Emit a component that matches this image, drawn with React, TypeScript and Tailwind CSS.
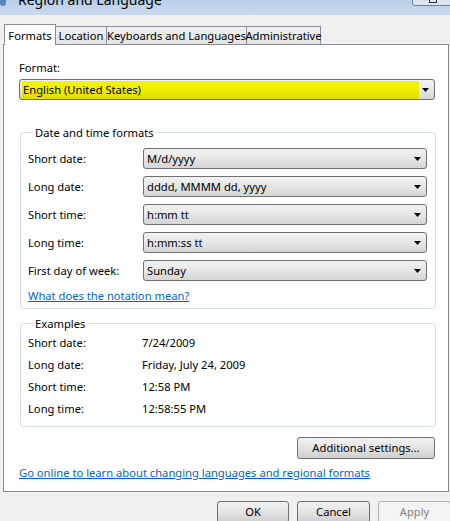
import React from "react";

const font = { fontFamily: '"Noto Sans", "Open Sans", sans-serif' };

function Arrow() {
  return (
    <svg width="7" height="4" viewBox="0 0 7 4" className="shrink-0">
      <path d="M0 0H7L3.5 4Z" fill="#000" />
    </svg>
  );
}

function Combo({ value, className = "" }: { value: string; className?: string }) {
  return (
    <div
      className={
        "flex h-[21px] items-center rounded-[3px] border border-[#707070] bg-gradient-to-b from-[#f2f2f2] via-[#e6e6e6] to-[#d5d5d5] pl-[3px] pr-[5px] " +
        className
      }
    >
      <span className="flex-1 truncate leading-[15px]">{value}</span>
      <Arrow />
    </div>
  );
}

function Btn({ label, disabled = false, className = "" }: { label: string; disabled?: boolean; className?: string }) {
  return (
    <div
      className={
        "flex h-[22px] items-center justify-center rounded-[3px] border " +
        (disabled
          ? "border-[#adb2b5] bg-[#f4f4f4] text-[#838383] "
          : "border-[#707070] bg-gradient-to-b from-[#f2f2f2] via-[#e3e3e3] to-[#cfcfcf] text-black ") +
        className
      }
    >
      {label}
    </div>
  );
}

const formatRows = [
  ["Short date:", "M/d/yyyy"],
  ["Long date:", "dddd, MMMM dd, yyyy"],
  ["Short time:", "h:mm tt"],
  ["Long time:", "h:mm:ss tt"],
  ["First day of week:", "Sunday"],
];

const exampleRows = [
  ["Short date:", "7/24/2009"],
  ["Long date:", "Friday, July 24, 2009"],
  ["Short time:", "12:58 PM"],
  ["Long time:", "12:58:55 PM"],
];

export default function App() {
  return (
    <div style={font} className="relative h-[521px] w-[450px] overflow-hidden bg-[#f0f0f0] text-[11.2px] text-black">
      {/* title bar */}
      <div className="relative h-[15px] bg-gradient-to-b from-[#b9cfe8] to-[#c9daee]">
        <div className="absolute left-0 top-[-6px] h-[12px] w-[6px] rounded-full bg-[#5a86b8]" />
        <div className="absolute left-[18px] top-[-10px] text-[14px] leading-[20px] text-black">Region and Language</div>
        <div className="absolute left-[412px] top-[-8px] h-[14px] w-[50px] rounded-[3px] border border-[#6e7f96] bg-[#dbe6f3]">
          <div className="absolute left-[16px] top-[6px] h-[4px] w-[8px] border border-[#333]" />
        </div>
      </div>

      {/* tabs */}
      <div className="relative z-10 flex items-end pl-[4px] pt-[9px]">
        <div className="-mb-px flex h-[21px] w-[52px] items-center justify-center border border-b-0 border-[#898c95] bg-white leading-[15px]">
          Formats
        </div>
        <div className="flex h-[18px] w-[51px] items-center justify-center border border-b-0 border-l-0 border-[#898c95] bg-gradient-to-b from-[#f2f2f2] to-[#e3e3e3] leading-[15px]">
          Location
        </div>
        <div className="flex h-[18px] w-[140px] items-center justify-center border border-b-0 border-l-0 border-[#898c95] bg-gradient-to-b from-[#f2f2f2] to-[#e3e3e3] leading-[15px]">
          Keyboards and Languages
        </div>
        <div className="flex h-[18px] w-[74px] items-center justify-center border border-b-0 border-l-0 border-[#898c95] bg-gradient-to-b from-[#f2f2f2] to-[#e3e3e3] leading-[15px]">
          Administrative
        </div>
      </div>

      {/* panel */}
      <div className="ml-[3px] flex h-[448px] w-[446px] flex-col border border-[#898c95] bg-white pl-[15px] pr-[13px] pt-[15px]">
        <div className="leading-[15px]">Format:</div>
        <div className="mt-[4px] flex h-[21px] items-center rounded-[3px] border border-[#707070] bg-gradient-to-b from-[#f2f2f2] via-[#e6e6e6] to-[#d5d5d5] pl-[2px] pr-[5px]">
          <span className="mr-[3px] flex h-[18px] flex-1 items-center bg-gradient-to-b from-[#f4f400] via-[#eeee00] to-[#dcdc00] pl-[1px] leading-[15px]">
            English (United States)
          </span>
          <Arrow />
        </div>

        <fieldset className="mt-[25px] ml-px w-[416px] rounded-[3px] border border-[#d5dfe5] pb-[5px] pl-[7px] pr-[8px] pt-[8px]">
          <legend className="ml-[5px] px-[2px] leading-[15px]">Date and time formats</legend>
          <div className="flex flex-col gap-[7px]">
            {formatRows.map(([label, value]) => (
              <div key={label} className="flex items-center">
                <span className="w-[115px] leading-[15px]">{label}</span>
                <Combo value={value} className="flex-1" />
              </div>
            ))}
          </div>
          <div className="mt-[7px] leading-[15px] text-[#0066cc] underline">What does the notation mean?</div>
        </fieldset>

        <fieldset className="mt-[7px] ml-px w-[416px] rounded-[3px] border border-[#d5dfe5] pb-[7px] pl-[7px] pr-[8px] pt-0">
          <legend className="ml-[5px] px-[2px] leading-[15px]">Examples</legend>
          {exampleRows.map(([label, value]) => (
            <div key={label} className="flex h-[22px] items-center">
              <span className="w-[114px] leading-[15px]">{label}</span>
              <span className="leading-[15px]">{value}</span>
            </div>
          ))}
        </fieldset>

        <div className="mt-[10px] flex justify-end">
          <Btn label="Additional settings..." className="w-[138px]" />
        </div>
        <div className="mt-[6px] leading-[15px] text-[#0066cc] underline">
          Go online to learn about changing languages and regional formats
        </div>
      </div>

      {/* dialog buttons */}
      <div className="flex gap-[8px] pl-[217px] pt-[9px]">
        <Btn label="OK" className="w-[72px] shrink-0" />
        <Btn label="Cancel" className="w-[73px] shrink-0" />
        <Btn label="Apply" disabled className="w-[73px] shrink-0" />
      </div>
    </div>
  );
}
